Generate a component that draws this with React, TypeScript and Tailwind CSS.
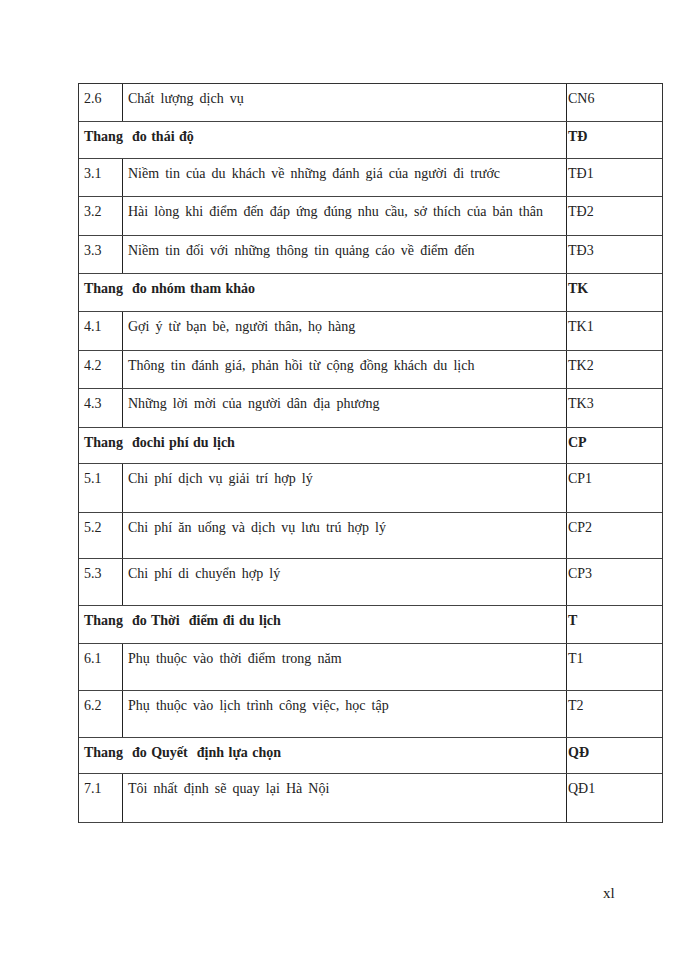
import React from "react";

type Row =
  | { kind: "item"; no: string; text: string; code: string; h: number }
  | { kind: "head"; text: string; code: string; h: number };

const rows: Row[] = [
  { kind: "item", no: "2.6", text: "Chất lượng dịch vụ", code: "CN6", h: 38 },
  { kind: "head", text: "Thang  đo thái độ", code: "TĐ", h: 37 },
  { kind: "item", no: "3.1", text: "Niềm tin của du khách về những đánh giá của người đi trước", code: "TĐ1", h: 38 },
  { kind: "item", no: "3.2", text: "Hài lòng khi điểm đến đáp ứng đúng nhu cầu, sở thích của bản thân", code: "TĐ2", h: 39 },
  { kind: "item", no: "3.3", text: "Niềm tin đối với những thông tin quảng cáo về điểm đến", code: "TĐ3", h: 38 },
  { kind: "head", text: "Thang  đo nhóm tham khảo", code: "TK", h: 38 },
  { kind: "item", no: "4.1", text: "Gợi ý từ bạn bè, người thân, họ hàng", code: "TK1", h: 39 },
  { kind: "item", no: "4.2", text: "Thông tin đánh giá, phản hồi từ cộng đồng khách du lịch", code: "TK2", h: 38 },
  { kind: "item", no: "4.3", text: "Những lời mời của người dân địa phương", code: "TK3", h: 39 },
  { kind: "head", text: "Thang  đochi phí du lịch", code: "CP", h: 36 },
  { kind: "item", no: "5.1", text: "Chi phí dịch vụ giải trí hợp lý", code: "CP1", h: 49 },
  { kind: "item", no: "5.2", text: "Chi phí ăn uống và dịch vụ lưu trú hợp lý", code: "CP2", h: 46 },
  { kind: "item", no: "5.3", text: "Chi phí di chuyển hợp lý", code: "CP3", h: 47 },
  { kind: "head", text: "Thang  đo Thời  điểm đi du lịch", code: "T", h: 38 },
  { kind: "item", no: "6.1", text: "Phụ thuộc vào thời điểm trong năm", code: "T1", h: 47 },
  { kind: "item", no: "6.2", text: "Phụ thuộc vào lịch trình công việc, học tập", code: "T2", h: 47 },
  { kind: "head", text: "Thang  đo Quyết  định lựa chọn", code: "QĐ", h: 36 },
  { kind: "item", no: "7.1", text: "Tôi nhất định sẽ quay lại Hà Nội", code: "QĐ1", h: 49 },
];

export default function App() {
  return (
    <div
      className="w-[700px] h-[960px] bg-white text-[#222] text-[14px] leading-[16px]"
      style={{ fontFamily: '"Liberation Serif", "Times New Roman", serif' }}
    >
      <div className="pt-[83px] pl-[78px]">
        <div className="w-[585px] border-t border-l border-r border-[#333]">
          {rows.map((r, i) =>
            r.kind === "item" ? (
              <div key={i} className="flex border-b border-[#444]" style={{ height: r.h }}>
                <div className="w-[44px] shrink-0 border-r border-[#222] pl-[5px] pt-[7px]">{r.no}</div>
                <div className="w-[444px] shrink-0 border-r border-[#222] pl-[5px] pt-[7px] whitespace-pre [word-spacing:2.6px]">
                  {r.text}
                </div>
                <div className="flex-1 pl-px pt-[7px]">{r.code}</div>
              </div>
            ) : (
              <div key={i} className="flex border-b border-[#444] font-bold" style={{ height: r.h }}>
                <div className="w-[488px] shrink-0 border-r border-[#222] pl-[5px] pt-[7px] whitespace-pre [word-spacing:1px]">
                  {r.text}
                </div>
                <div className="flex-1 pl-px pt-[7px]">{r.code}</div>
              </div>
            )
          )}
        </div>
      </div>
      <div className="pl-[603px] pt-[62px] text-[15px]">xl</div>
    </div>
  );
}
